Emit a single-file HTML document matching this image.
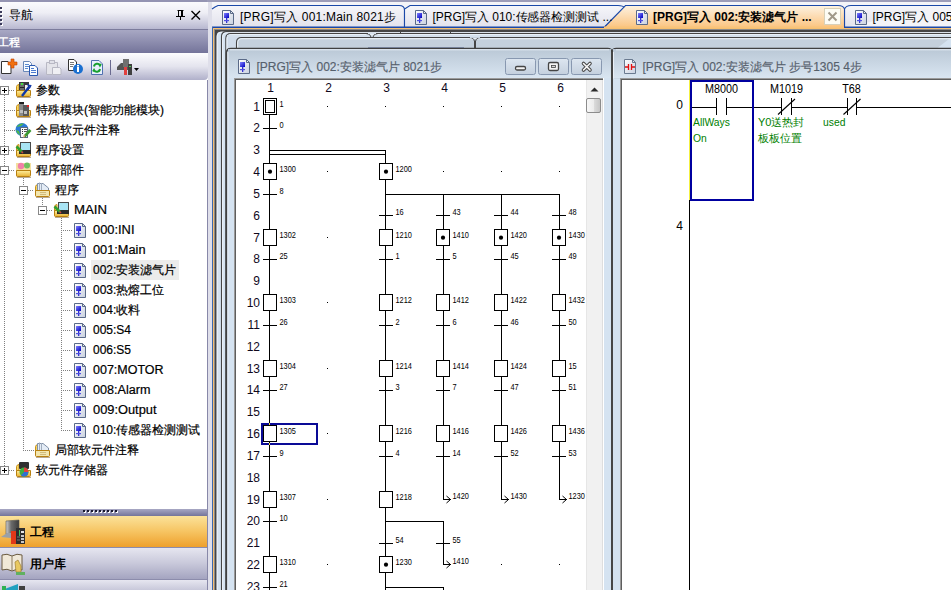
<!DOCTYPE html>
<html><head><meta charset="utf-8"><style>
*{margin:0;padding:0;box-sizing:border-box}
body{width:951px;height:590px;overflow:hidden;background:#fff;font-family:"Liberation Sans", sans-serif;font-size:12px;position:relative}
.a{position:absolute}
.t{position:absolute;white-space:nowrap;line-height:14px}
</style></head><body>
<!-- LEFT PANEL -->
<div class="a" style="left:0;top:0;width:212px;height:2px;background:#9494b2"></div>
<div class="a" style="left:0;top:2px;width:208px;height:27px;background:linear-gradient(#fbfbfd,#eeeef5 40%,#b8b8d0)"></div>
<div class="t" style="left:9px;top:8px;color:#000">导航</div>
<div class="a" style="left:0;top:29px;width:208px;height:1px;background:#7c7c9c"></div>
<div class="a" style="left:0;top:30px;width:208px;height:23px;background:linear-gradient(#a8a8c4,#74749a)"></div>
<div class="t" style="left:-2px;top:35px;color:#fff;font-size:11px;font-weight:bold">工程</div>
<div class="a" style="left:0;top:53px;width:208px;height:27px;background:linear-gradient(#fdfdfe,#e4e4ee 50%,#b0b0ca);border-radius:0 0 4px 4px"></div>
<div class="a" style="left:0;top:80px;width:207px;height:429px;background:#fff"></div>
<div class="a" style="left:207px;top:80px;width:1px;height:510px;background:#8888a8"></div>
<div class="a" style="left:208px;top:2px;width:4px;height:588px;background:#dfdfea"></div>
<div class="a" style="left:0;top:509px;width:207px;height:7px;background:linear-gradient(#a8a8c4,#74749a)"></div>
<div class="a" style="left:0;top:516px;width:207px;height:31px;background:linear-gradient(#fbe29a,#f6c462 50%,#eea02c)"></div>
<div class="t" style="left:30px;top:525px;font-weight:bold;font-size:12px;">工程</div>
<div class="a" style="left:0;top:547px;width:207px;height:1px;background:#8c8cac"></div>
<div class="a" style="left:0;top:548px;width:207px;height:31px;background:linear-gradient(#e6e6f0,#c8c8da 50%,#a4a4c0)"></div>
<div class="t" style="left:30px;top:557px;font-weight:bold;font-size:12px;">用户库</div>
<div class="a" style="left:0;top:579px;width:207px;height:1px;background:#8c8cac"></div>
<div class="a" style="left:0;top:580px;width:207px;height:10px;background:linear-gradient(#e6e6f0,#c8c8da)"></div>

<!-- TAB BAR -->


<svg class="a" style="left:0;top:0" width="951" height="590" font-family='"Liberation Sans", sans-serif'>
<defs>
<linearGradient id="docg" x1="0" y1="0" x2="1" y2="1"><stop offset="0" stop-color="#ffffff"/><stop offset="1" stop-color="#c8d0e0"/></linearGradient>
<linearGradient id="blueg" x1="0" y1="0" x2="1" y2="1"><stop offset="0" stop-color="#8080ff"/><stop offset="1" stop-color="#0000c0"/></linearGradient>
<linearGradient id="fold" x1="0" y1="0" x2="0" y2="1"><stop offset="0" stop-color="#fff0a0"/><stop offset="1" stop-color="#e8b030"/></linearGradient>
<linearGradient id="tabg" x1="0" y1="0" x2="0" y2="1"><stop offset="0" stop-color="#f6f6fa"/><stop offset="1" stop-color="#e2e2ec"/></linearGradient>
<linearGradient id="tabact" x1="0" y1="0" x2="0" y2="1"><stop offset="0" stop-color="#fdf2e2"/><stop offset="1" stop-color="#fbc27c"/></linearGradient>
</defs>
<rect x="207" y="0" width="744" height="2" fill="#9c9cb8"/>
<rect x="212" y="2" width="739" height="25" fill="#f4f4f8"/>
<path d="M212 27 V9 L217 5.5 H399 Q404.5 5.5 404.5 10 V27 Z" fill="url(#tabg)" stroke="none"/><path d="M212 9 L215 7 L218 5.5 H399 Q404.5 5.5 404.5 10 V27" fill="none" stroke="#1a48a8" stroke-width="1.1"/>
<path d="M844.5 27 V9 Q846 5.5 851 5.5 H951" fill="url(#tabg)" stroke="#1a48a8" stroke-width="1.1"/>
<path d="M404.5 27 V9 L410 5.5 H618 Q623 5.5 625 8 L605 27" fill="url(#tabg)" stroke="#1a48a8" stroke-width="1.1"/>
<path d="M603 28.5 L625.5 5.5 H838 Q843.5 5.5 844.5 9 V28.5" fill="url(#tabact)" stroke="#1a48a8" stroke-width="1.1"/>
<rect x="604" y="26.5" width="240" height="2.5" fill="#f9c47a"/>
<rect x="212" y="26.5" width="392" height="1" fill="#1a48a8"/>
<rect x="844" y="26.5" width="107" height="1" fill="#1a48a8"/>
<g transform="translate(222,10)">
<path d="M0.5 0.5 H8.5 L11.5 3.5 V14.5 H0.5 Z" fill="url(#docg)" stroke="#5a6a88" stroke-width="1"/>
<path d="M8.5 0.5 V3.5 H11.5" fill="none" stroke="#5a6a88" stroke-width="1"/>
<rect x="2" y="3" width="5" height="5" fill="url(#blueg)"/>
<rect x="4" y="8" width="1.3" height="5" fill="#3030d0"/>
<rect x="2" y="10" width="5" height="1.2" fill="#5050e0"/>
</g>
<text x="240" y="20.6" font-size="12" fill="#000" textLength="156" lengthAdjust="spacing">[PRG]写入 001:Main 8021步</text>
<g transform="translate(415,10)">
<path d="M0.5 0.5 H8.5 L11.5 3.5 V14.5 H0.5 Z" fill="url(#docg)" stroke="#5a6a88" stroke-width="1"/>
<path d="M8.5 0.5 V3.5 H11.5" fill="none" stroke="#5a6a88" stroke-width="1"/>
<rect x="2" y="3" width="5" height="5" fill="url(#blueg)"/>
<rect x="4" y="8" width="1.3" height="5" fill="#3030d0"/>
<rect x="2" y="10" width="5" height="1.2" fill="#5050e0"/>
</g>
<text x="432.5" y="20.6" font-size="12" fill="#000" textLength="180" lengthAdjust="spacing">[PRG]写入 010:传感器检测测试 ...</text>
<g transform="translate(636,10)">
<path d="M0.5 0.5 H8.5 L11.5 3.5 V14.5 H0.5 Z" fill="url(#docg)" stroke="#5a6a88" stroke-width="1"/>
<path d="M8.5 0.5 V3.5 H11.5" fill="none" stroke="#5a6a88" stroke-width="1"/>
<rect x="2" y="3" width="5" height="5" fill="url(#blueg)"/>
<rect x="4" y="8" width="1.3" height="5" fill="#3030d0"/>
<rect x="2" y="10" width="5" height="1.2" fill="#5050e0"/>
</g>
<text x="653" y="20.6" font-size="12" font-weight="bold" fill="#000">[PRG]写入 002:安装滤气片 ...</text>
<rect x="824.5" y="8.5" width="16" height="16" fill="#fdfcf4" stroke="#d8d0b8"/>
<path d="M828.5 12.5 L836.5 20.5 M836.5 12.5 L828.5 20.5" stroke="#a09888" stroke-width="2"/>
<g transform="translate(855,10)">
<path d="M0.5 0.5 H8.5 L11.5 3.5 V14.5 H0.5 Z" fill="url(#docg)" stroke="#5a6a88" stroke-width="1"/>
<path d="M8.5 0.5 V3.5 H11.5" fill="none" stroke="#5a6a88" stroke-width="1"/>
<rect x="2" y="3" width="5" height="5" fill="url(#blueg)"/>
<rect x="4" y="8" width="1.3" height="5" fill="#3030d0"/>
<rect x="2" y="10" width="5" height="1.2" fill="#5050e0"/>
</g>
<text x="872.5" y="20.6" font-size="12" fill="#000">[PRG]写入 005:S4 8021步</text>
<rect x="91" y="260" width="88" height="20" fill="#ececec"/>
<line x1="4.5" y1="95" x2="4.5" y2="469" stroke="#808080" stroke-width="1" stroke-dasharray="1 1"/>
<line x1="23.5" y1="176" x2="23.5" y2="449" stroke="#808080" stroke-width="1" stroke-dasharray="1 1"/>
<line x1="42.5" y1="196" x2="42.5" y2="209" stroke="#808080" stroke-width="1" stroke-dasharray="1 1"/>
<line x1="61.5" y1="216" x2="61.5" y2="429" stroke="#808080" stroke-width="1" stroke-dasharray="1 1"/>
<rect x="0.5" y="86.5" width="8" height="8" fill="#fff" stroke="#888"/><rect x="2" y="90" width="5" height="1" fill="#000"/><rect x="4" y="88" width="1" height="5" fill="#000"/>
<line x1="9" y1="90.5" x2="15" y2="90.5" stroke="#808080" stroke-width="1" stroke-dasharray="1 1"/>
<g transform="translate(15,82)">
<path d="M1.5 4.5 Q2 2.5 4 2.5 V13.5 H1.5 Z" fill="#f8d860" stroke="#c89020" stroke-width="1"/>
<rect x="4" y="0" width="10" height="9" fill="#3a3a3a"/><rect x="5" y="1" width="4" height="7" fill="#6a6a6a"/><rect x="6" y="1" width="2" height="2" fill="#40e040"/><rect x="5" y="5" width="4" height="1" fill="#222"/><rect x="10" y="3" width="3" height="6" fill="#f0f0f0"/>
<path d="M1.5 8.5 H15.5 V13.5 Q15.5 14.5 14.5 14.5 H2.5 Q1.5 14.5 1.5 13.5 Z" fill="url(#fold)" stroke="#b88010" stroke-width="1"/>
<rect x="2" y="15" width="14" height="1" fill="#8a7050" opacity="0.6"/>
<path d="M7 14 L14 5" stroke="#1038a8" stroke-width="2.4"/><path d="M12.5 2.5 L15 4 L14 6.5 M16 3 L14.5 6" stroke="#1038a8" stroke-width="1.6" fill="none"/>
</g>
<text x="36" y="93.5" font-size="12" fill="#000" stroke="#000" stroke-width="0.2">参数</text>
<line x1="4" y1="110.5" x2="15" y2="110.5" stroke="#808080" stroke-width="1" stroke-dasharray="1 1"/>
<g transform="translate(15,102)">
<path d="M1.5 4.5 Q2 2.5 4 2.5 V13.5 H1.5 Z" fill="#f8d860" stroke="#c89020" stroke-width="1"/>

<path d="M1.5 8.5 H15.5 V13.5 Q15.5 14.5 14.5 14.5 H2.5 Q1.5 14.5 1.5 13.5 Z" fill="url(#fold)" stroke="#b88010" stroke-width="1"/>
<rect x="2" y="15" width="14" height="1" fill="#8a7050" opacity="0.6"/>
<rect x="4" y="0" width="5" height="2" fill="#202020"/><rect x="4" y="2" width="5" height="12" fill="#8a8a8a"/><rect x="8" y="3" width="6" height="11" fill="#5a5a5a"/><rect x="12" y="3" width="2" height="2" fill="#e02020"/><rect x="5" y="8" width="3" height="3" fill="#c0c0c0"/><rect x="9" y="9" width="3" height="3" fill="#c0c0c0"/>
</g>
<text x="36" y="113.5" font-size="12" fill="#000" stroke="#000" stroke-width="0.2">特殊模块(智能功能模块)</text>
<line x1="4" y1="130.5" x2="15" y2="130.5" stroke="#808080" stroke-width="1" stroke-dasharray="1 1"/>
<g transform="translate(15,122)"><circle cx="7" cy="7.5" r="6.5" fill="#2a7ad8"/><path d="M1.5 5 Q4 1 9 1.5 Q7 4 4 4.5 Z" fill="#50b848"/><path d="M0.8 8 Q2 12 5 13.5 L4 9 Z" fill="#50b848"/><rect x="5.5" y="5.5" width="7" height="10" fill="#fafafa" stroke="#5a6a80"/><rect x="7" y="7" width="1" height="1" fill="#333"/><rect x="9" y="7" width="3" height="1" fill="#555"/><rect x="7" y="9" width="1" height="1" fill="#333"/><rect x="9" y="9" width="3" height="1" fill="#555"/><rect x="7" y="11" width="1" height="1" fill="#333"/><path d="M9.5 14.5 L15.5 8" stroke="#3a9a30" stroke-width="2.6"/><path d="M8.5 15.5 L10 13" stroke="#d8a060" stroke-width="1.2"/></g>
<text x="36" y="133.5" font-size="12" fill="#000" stroke="#000" stroke-width="0.2">全局软元件注释</text>
<rect x="0.5" y="146.5" width="8" height="8" fill="#fff" stroke="#888"/><rect x="2" y="150" width="5" height="1" fill="#000"/><rect x="4" y="148" width="1" height="5" fill="#000"/>
<line x1="9" y1="150.5" x2="15" y2="150.5" stroke="#808080" stroke-width="1" stroke-dasharray="1 1"/>
<g transform="translate(15,142)">
<path d="M1.5 4.5 Q2 2.5 4 2.5 V13.5 H1.5 Z" fill="#f8d860" stroke="#c89020" stroke-width="1"/>
<rect x="5.5" y="0.5" width="10" height="8" fill="#a8e4f4" stroke="#4a4a4a"/>
<path d="M1.5 8.5 H15.5 V13.5 Q15.5 14.5 14.5 14.5 H2.5 Q1.5 14.5 1.5 13.5 Z" fill="url(#fold)" stroke="#b88010" stroke-width="1"/>
<rect x="2" y="15" width="14" height="1" fill="#8a7050" opacity="0.6"/>
<rect x="4" y="8" width="12" height="4" fill="#2a2a2a"/><path d="M1.5 4.5 L7 10" stroke="#30a030" stroke-width="2.6"/><path d="M6.5 9.5 L8 11" stroke="#d04040" stroke-width="1.5"/>
</g>
<text x="36" y="153.5" font-size="12" fill="#000" stroke="#000" stroke-width="0.2">程序设置</text>
<rect x="0.5" y="166.5" width="8" height="8" fill="#fff" stroke="#888"/><rect x="2" y="170" width="5" height="1" fill="#000"/>
<line x1="9" y1="170.5" x2="15" y2="170.5" stroke="#808080" stroke-width="1" stroke-dasharray="1 1"/>
<g transform="translate(15,162)">
<path d="M1.5 4.5 Q2 2.5 4 2.5 V13.5 H1.5 Z" fill="#f8d860" stroke="#c89020" stroke-width="1"/>
<rect x="1" y="1" width="15" height="8" fill="#f4e0a0"/><circle cx="6" cy="4" r="3.2" fill="#f080a8"/><circle cx="12" cy="3.5" r="3" fill="#70c060"/>
<path d="M1.5 8.5 H15.5 V13.5 Q15.5 14.5 14.5 14.5 H2.5 Q1.5 14.5 1.5 13.5 Z" fill="url(#fold)" stroke="#b88010" stroke-width="1"/>
<rect x="2" y="15" width="14" height="1" fill="#8a7050" opacity="0.6"/>

</g>
<text x="36" y="173.5" font-size="12" fill="#000" stroke="#000" stroke-width="0.2">程序部件</text>
<rect x="19.5" y="186.5" width="8" height="8" fill="#fff" stroke="#888"/><rect x="21" y="190" width="5" height="1" fill="#000"/>
<line x1="28" y1="190.5" x2="34" y2="190.5" stroke="#808080" stroke-width="1" stroke-dasharray="1 1"/>
<g transform="translate(34,182)">
<path d="M1.5 4.5 Q2 2.5 4 2.5 V13.5 H1.5 Z" fill="#f8d860" stroke="#c89020" stroke-width="1"/>
<path d="M3.5 1.5 H9 L14.5 6 V13 H3.5 Z" fill="#e4ecf6" stroke="#8090a8"/><path d="M5.5 0.5 V10 M7.5 1 V10" stroke="#a0acbc"/>
<path d="M1.5 8.5 H15.5 V13.5 Q15.5 14.5 14.5 14.5 H2.5 Q1.5 14.5 1.5 13.5 Z" fill="#f2e6b0" stroke="#b88010" stroke-width="1"/>
<rect x="2" y="15" width="14" height="1" fill="#8a7050" opacity="0.6"/>
<path d="M6 10.5 H12 M6 12.5 H12" stroke="#c8b070" stroke-width="0.8"/>
</g>
<text x="55" y="193.5" font-size="12" fill="#000" stroke="#000" stroke-width="0.2">程序</text>
<rect x="38.5" y="206.5" width="8" height="8" fill="#fff" stroke="#888"/><rect x="40" y="210" width="5" height="1" fill="#000"/>
<line x1="47" y1="210.5" x2="53" y2="210.5" stroke="#808080" stroke-width="1" stroke-dasharray="1 1"/>
<g transform="translate(53,202)">
<path d="M1.5 4.5 Q2 2.5 4 2.5 V13.5 H1.5 Z" fill="#f8d860" stroke="#c89020" stroke-width="1"/>
<rect x="5.5" y="0.5" width="10" height="8" fill="#a8e4f4" stroke="#4a4a4a"/>
<path d="M1.5 8.5 H15.5 V13.5 Q15.5 14.5 14.5 14.5 H2.5 Q1.5 14.5 1.5 13.5 Z" fill="url(#fold)" stroke="#b88010" stroke-width="1"/>
<rect x="2" y="15" width="14" height="1" fill="#8a7050" opacity="0.6"/>
<rect x="4" y="8" width="12" height="4" fill="#2a2a2a"/><path d="M1.5 4.5 L7 10" stroke="#30a030" stroke-width="2.6"/><path d="M6.5 9.5 L8 11" stroke="#d04040" stroke-width="1.5"/>
</g>
<text x="74" y="213.5" font-size="12" fill="#000" stroke="#000" stroke-width="0.2" textLength="33" lengthAdjust="spacingAndGlyphs">MAIN</text>
<line x1="61" y1="230.5" x2="73" y2="230.5" stroke="#808080" stroke-width="1" stroke-dasharray="1 1"/>
<g transform="translate(74,223)">
<path d="M0.5 0.5 H8.5 L11.5 3.5 V14.5 H0.5 Z" fill="url(#docg)" stroke="#5a6a88" stroke-width="1"/>
<path d="M8.5 0.5 V3.5 H11.5" fill="none" stroke="#5a6a88" stroke-width="1"/>
<rect x="2" y="3" width="5" height="5" fill="url(#blueg)"/>
<rect x="4" y="8" width="1.3" height="5" fill="#3030d0"/>
<rect x="2" y="10" width="5" height="1.2" fill="#5050e0"/>
</g>
<text x="93" y="233.5" font-size="12" fill="#000" stroke="#000" stroke-width="0.2" textLength="41.5" lengthAdjust="spacingAndGlyphs">000:INI</text>
<line x1="61" y1="250.5" x2="73" y2="250.5" stroke="#808080" stroke-width="1" stroke-dasharray="1 1"/>
<g transform="translate(74,243)">
<path d="M0.5 0.5 H8.5 L11.5 3.5 V14.5 H0.5 Z" fill="url(#docg)" stroke="#5a6a88" stroke-width="1"/>
<path d="M8.5 0.5 V3.5 H11.5" fill="none" stroke="#5a6a88" stroke-width="1"/>
<rect x="2" y="3" width="5" height="5" fill="url(#blueg)"/>
<rect x="4" y="8" width="1.3" height="5" fill="#3030d0"/>
<rect x="2" y="10" width="5" height="1.2" fill="#5050e0"/>
</g>
<text x="93" y="253.5" font-size="12" fill="#000" stroke="#000" stroke-width="0.2" textLength="52.5" lengthAdjust="spacingAndGlyphs">001:Main</text>
<line x1="61" y1="270.5" x2="73" y2="270.5" stroke="#808080" stroke-width="1" stroke-dasharray="1 1"/>
<g transform="translate(74,263)">
<path d="M0.5 0.5 H8.5 L11.5 3.5 V14.5 H0.5 Z" fill="url(#docg)" stroke="#5a6a88" stroke-width="1"/>
<path d="M8.5 0.5 V3.5 H11.5" fill="none" stroke="#5a6a88" stroke-width="1"/>
<rect x="2" y="3" width="5" height="5" fill="url(#blueg)"/>
<rect x="4" y="8" width="1.3" height="5" fill="#3030d0"/>
<rect x="2" y="10" width="5" height="1.2" fill="#5050e0"/>
</g>
<text x="93" y="273.5" font-size="12" fill="#000" stroke="#000" stroke-width="0.2">002:安装滤气片</text>
<line x1="61" y1="290.5" x2="73" y2="290.5" stroke="#808080" stroke-width="1" stroke-dasharray="1 1"/>
<g transform="translate(74,283)">
<path d="M0.5 0.5 H8.5 L11.5 3.5 V14.5 H0.5 Z" fill="url(#docg)" stroke="#5a6a88" stroke-width="1"/>
<path d="M8.5 0.5 V3.5 H11.5" fill="none" stroke="#5a6a88" stroke-width="1"/>
<rect x="2" y="3" width="5" height="5" fill="url(#blueg)"/>
<rect x="4" y="8" width="1.3" height="5" fill="#3030d0"/>
<rect x="2" y="10" width="5" height="1.2" fill="#5050e0"/>
</g>
<text x="93" y="293.5" font-size="12" fill="#000" stroke="#000" stroke-width="0.2">003:热熔工位</text>
<line x1="61" y1="310.5" x2="73" y2="310.5" stroke="#808080" stroke-width="1" stroke-dasharray="1 1"/>
<g transform="translate(74,303)">
<path d="M0.5 0.5 H8.5 L11.5 3.5 V14.5 H0.5 Z" fill="url(#docg)" stroke="#5a6a88" stroke-width="1"/>
<path d="M8.5 0.5 V3.5 H11.5" fill="none" stroke="#5a6a88" stroke-width="1"/>
<rect x="2" y="3" width="5" height="5" fill="url(#blueg)"/>
<rect x="4" y="8" width="1.3" height="5" fill="#3030d0"/>
<rect x="2" y="10" width="5" height="1.2" fill="#5050e0"/>
</g>
<text x="93" y="313.5" font-size="12" fill="#000" stroke="#000" stroke-width="0.2">004:收料</text>
<line x1="61" y1="330.5" x2="73" y2="330.5" stroke="#808080" stroke-width="1" stroke-dasharray="1 1"/>
<g transform="translate(74,323)">
<path d="M0.5 0.5 H8.5 L11.5 3.5 V14.5 H0.5 Z" fill="url(#docg)" stroke="#5a6a88" stroke-width="1"/>
<path d="M8.5 0.5 V3.5 H11.5" fill="none" stroke="#5a6a88" stroke-width="1"/>
<rect x="2" y="3" width="5" height="5" fill="url(#blueg)"/>
<rect x="4" y="8" width="1.3" height="5" fill="#3030d0"/>
<rect x="2" y="10" width="5" height="1.2" fill="#5050e0"/>
</g>
<text x="93" y="333.5" font-size="12" fill="#000" stroke="#000" stroke-width="0.2">005:S4</text>
<line x1="61" y1="350.5" x2="73" y2="350.5" stroke="#808080" stroke-width="1" stroke-dasharray="1 1"/>
<g transform="translate(74,343)">
<path d="M0.5 0.5 H8.5 L11.5 3.5 V14.5 H0.5 Z" fill="url(#docg)" stroke="#5a6a88" stroke-width="1"/>
<path d="M8.5 0.5 V3.5 H11.5" fill="none" stroke="#5a6a88" stroke-width="1"/>
<rect x="2" y="3" width="5" height="5" fill="url(#blueg)"/>
<rect x="4" y="8" width="1.3" height="5" fill="#3030d0"/>
<rect x="2" y="10" width="5" height="1.2" fill="#5050e0"/>
</g>
<text x="93" y="353.5" font-size="12" fill="#000" stroke="#000" stroke-width="0.2">006:S5</text>
<line x1="61" y1="370.5" x2="73" y2="370.5" stroke="#808080" stroke-width="1" stroke-dasharray="1 1"/>
<g transform="translate(74,363)">
<path d="M0.5 0.5 H8.5 L11.5 3.5 V14.5 H0.5 Z" fill="url(#docg)" stroke="#5a6a88" stroke-width="1"/>
<path d="M8.5 0.5 V3.5 H11.5" fill="none" stroke="#5a6a88" stroke-width="1"/>
<rect x="2" y="3" width="5" height="5" fill="url(#blueg)"/>
<rect x="4" y="8" width="1.3" height="5" fill="#3030d0"/>
<rect x="2" y="10" width="5" height="1.2" fill="#5050e0"/>
</g>
<text x="93" y="373.5" font-size="12" fill="#000" stroke="#000" stroke-width="0.2" textLength="70.5" lengthAdjust="spacingAndGlyphs">007:MOTOR</text>
<line x1="61" y1="390.5" x2="73" y2="390.5" stroke="#808080" stroke-width="1" stroke-dasharray="1 1"/>
<g transform="translate(74,383)">
<path d="M0.5 0.5 H8.5 L11.5 3.5 V14.5 H0.5 Z" fill="url(#docg)" stroke="#5a6a88" stroke-width="1"/>
<path d="M8.5 0.5 V3.5 H11.5" fill="none" stroke="#5a6a88" stroke-width="1"/>
<rect x="2" y="3" width="5" height="5" fill="url(#blueg)"/>
<rect x="4" y="8" width="1.3" height="5" fill="#3030d0"/>
<rect x="2" y="10" width="5" height="1.2" fill="#5050e0"/>
</g>
<text x="93" y="393.5" font-size="12" fill="#000" stroke="#000" stroke-width="0.2" textLength="57.5" lengthAdjust="spacingAndGlyphs">008:Alarm</text>
<line x1="61" y1="410.5" x2="73" y2="410.5" stroke="#808080" stroke-width="1" stroke-dasharray="1 1"/>
<g transform="translate(74,403)">
<path d="M0.5 0.5 H8.5 L11.5 3.5 V14.5 H0.5 Z" fill="url(#docg)" stroke="#5a6a88" stroke-width="1"/>
<path d="M8.5 0.5 V3.5 H11.5" fill="none" stroke="#5a6a88" stroke-width="1"/>
<rect x="2" y="3" width="5" height="5" fill="url(#blueg)"/>
<rect x="4" y="8" width="1.3" height="5" fill="#3030d0"/>
<rect x="2" y="10" width="5" height="1.2" fill="#5050e0"/>
</g>
<text x="93" y="413.5" font-size="12" fill="#000" stroke="#000" stroke-width="0.2" textLength="63.5" lengthAdjust="spacingAndGlyphs">009:Output</text>
<line x1="61" y1="430.5" x2="73" y2="430.5" stroke="#808080" stroke-width="1" stroke-dasharray="1 1"/>
<g transform="translate(74,423)">
<path d="M0.5 0.5 H8.5 L11.5 3.5 V14.5 H0.5 Z" fill="url(#docg)" stroke="#5a6a88" stroke-width="1"/>
<path d="M8.5 0.5 V3.5 H11.5" fill="none" stroke="#5a6a88" stroke-width="1"/>
<rect x="2" y="3" width="5" height="5" fill="url(#blueg)"/>
<rect x="4" y="8" width="1.3" height="5" fill="#3030d0"/>
<rect x="2" y="10" width="5" height="1.2" fill="#5050e0"/>
</g>
<text x="93" y="433.5" font-size="12" fill="#000" stroke="#000" stroke-width="0.2">010:传感器检测测试</text>
<line x1="23" y1="450.5" x2="34" y2="450.5" stroke="#808080" stroke-width="1" stroke-dasharray="1 1"/>
<g transform="translate(34,442)">
<path d="M1.5 4.5 Q2 2.5 4 2.5 V13.5 H1.5 Z" fill="#f8d860" stroke="#c89020" stroke-width="1"/>
<path d="M3.5 1.5 H9 L14.5 6 V13 H3.5 Z" fill="#e4ecf6" stroke="#8090a8"/><path d="M5.5 0.5 V10 M7.5 1 V10" stroke="#a0acbc"/>
<path d="M1.5 8.5 H15.5 V13.5 Q15.5 14.5 14.5 14.5 H2.5 Q1.5 14.5 1.5 13.5 Z" fill="#f2e6b0" stroke="#b88010" stroke-width="1"/>
<rect x="2" y="15" width="14" height="1" fill="#8a7050" opacity="0.6"/>
<path d="M6 10.5 H12 M6 12.5 H12" stroke="#c8b070" stroke-width="0.8"/>
</g>
<text x="55" y="453.5" font-size="12" fill="#000" stroke="#000" stroke-width="0.2">局部软元件注释</text>
<rect x="0.5" y="466.5" width="8" height="8" fill="#fff" stroke="#888"/><rect x="2" y="470" width="5" height="1" fill="#000"/><rect x="4" y="468" width="1" height="5" fill="#000"/>
<line x1="9" y1="470.5" x2="15" y2="470.5" stroke="#808080" stroke-width="1" stroke-dasharray="1 1"/>
<g transform="translate(15,462)">
<path d="M1.5 4.5 Q2 2.5 4 2.5 V13.5 H1.5 Z" fill="#f8d860" stroke="#c89020" stroke-width="1"/>
<rect x="4" y="0" width="10" height="7" rx="1" fill="#303030"/>
<path d="M1.5 8.5 H15.5 V13.5 Q15.5 14.5 14.5 14.5 H2.5 Q1.5 14.5 1.5 13.5 Z" fill="url(#fold)" stroke="#b88010" stroke-width="1"/>
<rect x="2" y="15" width="14" height="1" fill="#8a7050" opacity="0.6"/>
<circle cx="9" cy="10" r="4.5" fill="#40b040"/><path d="M9 10 L9 5.5 A4.5 4.5 0 0 1 13.5 10 Z" fill="#e04040"/><path d="M9 10 L13.5 10 A4.5 4.5 0 0 1 6 13.4 Z" fill="#3070d0"/>
</g>
<text x="36" y="473.5" font-size="12" fill="#000" stroke="#000" stroke-width="0.2">软元件存储器</text>
<rect x="1" y="8" width="2" height="2" fill="#ffffff"/>
<rect x="0" y="7" width="2" height="2" fill="#3a3a5a"/>
<rect x="1" y="12" width="2" height="2" fill="#ffffff"/>
<rect x="0" y="11" width="2" height="2" fill="#3a3a5a"/>
<rect x="1" y="16" width="2" height="2" fill="#ffffff"/>
<rect x="0" y="15" width="2" height="2" fill="#3a3a5a"/>
<rect x="1" y="20" width="2" height="2" fill="#ffffff"/>
<rect x="0" y="19" width="2" height="2" fill="#3a3a5a"/>
<rect x="1" y="24" width="2" height="2" fill="#ffffff"/>
<rect x="0" y="23" width="2" height="2" fill="#3a3a5a"/>
<path d="M177.5 10.5 H183.5 M178.5 10.5 V16.5 H182.5 V10.5 M176 16.5 H185 M180.5 16.5 V20" stroke="#000" stroke-width="1" fill="none"/>
<rect x="181" y="11" width="1" height="5" fill="#000"/>
<path d="M191.5 11 L200 19.5 M200 11 L191.5 19.5" stroke="#000" stroke-width="1.35"/>
<path d="M1.5 61.5 H8 L11 64.5 V73.5 H1.5 Z" fill="#fff" stroke="#333"/>
<path d="M11 59 H14 V62 H17 V65 H14 V68 H11 V65 H8 V62 H11 Z" fill="#f07010" stroke="#c04000" stroke-width="0.6"/>
<path d="M23.5 61.5 H29.5 L31.5 63.5 V71.5 H23.5 Z" fill="#f8fbff" stroke="#6a88b8"/>
<rect x="25" y="64" width="4" height="1" fill="#5a8ad0"/><rect x="25" y="66" width="5" height="1" fill="#5a8ad0"/><rect x="25" y="68" width="3" height="1" fill="#5a8ad0"/>
<path d="M29.5 65.5 H35 L37.5 68 V75.5 H29.5 Z" fill="#f8fbff" stroke="#2a58b0"/>
<rect x="31" y="68" width="3" height="1" fill="#4a7ad0"/><rect x="31" y="70" width="5" height="1" fill="#4a7ad0"/><rect x="31" y="72" width="5" height="1" fill="#4a7ad0"/>
<path d="M46.5 62.5 H57.5 V74.5 H46.5 Z" fill="#e4e4ea" stroke="#b8b8c4"/>
<rect x="49.5" y="60.5" width="5" height="3" fill="#e0e0e8" stroke="#b8b8c4"/>
<path d="M52.5 67.5 H59.5 L61 69 V74.5 H52.5 Z" fill="#f0f0f4" stroke="#b8b8c4"/>
<path d="M68.5 59.5 H74 L76.5 62 V70.5 H68.5 Z" fill="#fff" stroke="#333"/>
<rect x="70" y="62" width="4" height="1" fill="#777"/><rect x="70" y="64" width="4" height="1" fill="#777"/><rect x="70" y="66" width="3" height="1" fill="#777"/>
<circle cx="78" cy="69" r="5" fill="#1a6fd0"/>
<rect x="77" y="67" width="2" height="5" fill="#fff"/><rect x="77" y="65" width="2" height="1.5" fill="#fff"/>
<path d="M91.5 60.5 H99 L102.5 64 V74.5 H91.5 Z" fill="#e8f0fc" stroke="#5070b0"/>
<path d="M94 66.5 A3.2 3.2 0 0 1 100 65.5 L101 64 M100 69 A3.2 3.2 0 0 1 94 70 L93 71.5" stroke="#18a030" stroke-width="2" fill="none"/>
<rect x="110" y="60" width="1" height="15" fill="#6a6a90"/>
<path d="M117 67 L121 63 H128 V70 H117 Z" fill="#555"/>
<rect x="123" y="59" width="6" height="8" fill="#707070"/>
<rect x="124" y="67" width="3" height="8" fill="#e04040"/>
<rect x="128" y="64" width="4" height="11" fill="#404040"/>
<rect x="129" y="66" width="2" height="1" fill="#50d050"/>
<path d="M134 68 H139 L136.5 71 Z" fill="#000"/>
<rect x="84" y="511" width="2" height="2" fill="#ffffff"/><rect x="83" y="510" width="2" height="2" fill="#1a1a30"/>
<rect x="88" y="511" width="2" height="2" fill="#ffffff"/><rect x="87" y="510" width="2" height="2" fill="#1a1a30"/>
<rect x="92" y="511" width="2" height="2" fill="#ffffff"/><rect x="91" y="510" width="2" height="2" fill="#1a1a30"/>
<rect x="96" y="511" width="2" height="2" fill="#ffffff"/><rect x="95" y="510" width="2" height="2" fill="#1a1a30"/>
<rect x="100" y="511" width="2" height="2" fill="#ffffff"/><rect x="99" y="510" width="2" height="2" fill="#1a1a30"/>
<rect x="104" y="511" width="2" height="2" fill="#ffffff"/><rect x="103" y="510" width="2" height="2" fill="#1a1a30"/>
<rect x="108" y="511" width="2" height="2" fill="#ffffff"/><rect x="107" y="510" width="2" height="2" fill="#1a1a30"/>
<rect x="112" y="511" width="2" height="2" fill="#ffffff"/><rect x="111" y="510" width="2" height="2" fill="#1a1a30"/>
<rect x="116" y="511" width="2" height="2" fill="#ffffff"/><rect x="115" y="510" width="2" height="2" fill="#1a1a30"/>
<defs><linearGradient id="lap" x1="0" y1="0" x2="1" y2="0"><stop offset="0" stop-color="#d0d0d0"/><stop offset="0.4" stop-color="#6a6a6a"/><stop offset="1" stop-color="#3a3a3a"/></linearGradient></defs>
<path d="M6 521 L19 520 V534 H6 Z" fill="url(#lap)" stroke="#555" stroke-width="0.6"/>
<path d="M1 537 L7 533 H13 L11 538 Z" fill="#9aa0a8"/>
<rect x="11" y="531" width="5" height="13" fill="#e03818"/>
<rect x="16" y="528" width="9" height="16" fill="#2e2e2e"/>
<rect x="19" y="530" width="1" height="6" fill="#40c060"/>
<rect x="21" y="531" width="3" height="2" fill="#e8e8e8"/><rect x="21" y="535" width="3" height="2" fill="#c8c8c8"/><rect x="21" y="538" width="3" height="2" fill="#c8c8c8"/><rect x="21" y="541" width="3" height="2" fill="#c8c8c8"/>
<path d="M17 537 H20 M17 540 H20" stroke="#888" stroke-width="0.8"/>
<path d="M2 555 Q7 553 12 556 Q17 553 22 555 V570 Q17 568 12 571 Q7 568 2 570 Z" fill="#f0e8d8" stroke="#6a5a40"/>
<path d="M12 556 V571" stroke="#8a7a60"/>
<path d="M15 562 L18 560 L21 566 V572 H16 Z" fill="#e8c860" stroke="#a08030" stroke-width="0.7"/>
<rect x="16" y="572" width="9" height="3" fill="#60b060"/>
<path d="M2 590 L18 584 V590 Z" fill="#20a0c0"/><rect x="2" y="586" width="4" height="4" fill="#30b050"/><rect x="19" y="586" width="6" height="4" fill="#404040"/>
<!-- MDI background / frames -->
<rect x="212" y="27" width="392" height="1" fill="#1a48a8"/>
<rect x="844" y="27" width="107" height="1" fill="#1a48a8"/>
<rect x="604" y="27" width="240" height="1" fill="#f9c47a"/>
<rect x="212" y="27" width="1" height="563" fill="#3a68b0"/>
<rect x="213" y="28" width="738" height="1" fill="#f8c070"/>
<rect x="213" y="28" width="1" height="562" fill="#f8c070"/>
<rect x="214" y="29" width="737" height="561" fill="#d4e2f0"/>
<rect x="214" y="29" width="737" height="1" fill="#8a8a8a"/>
<rect x="214" y="29" width="1" height="561" fill="#8a8a8a"/>
<rect x="215" y="30" width="736" height="2" fill="#454545"/>
<rect x="215" y="30" width="2" height="560" fill="#454545"/>
<path d="M216 590 V36 Q216 31 221 31 H951" stroke="#454545" stroke-width="1.3" fill="#d4e2f0"/>
<path d="M217.2 590 V36.5 Q217.2 32.2 221.5 32.2 H951" stroke="#eef4fa" stroke-width="1" fill="none"/>
<path d="M221.5 590 V36.6 Q221.5 31.6 226.5 31.6 H951" stroke="#454545" stroke-width="1.1" fill="#d4e2f0"/>
<path d="M222.7 590 V37.1 Q222.7 32.800000000000004 227.0 32.800000000000004 H951" stroke="#eef4fa" stroke-width="1" fill="none"/>
<path d="M225.8 590 V38.5 Q225.8 33.5 230.8 33.5 H951" stroke="#454545" stroke-width="1.1" fill="#d0dcea"/>
<path d="M227.0 590 V39.0 Q227.0 34.7 231.3 34.7 H951" stroke="#eef4fa" stroke-width="1" fill="none"/>
<rect x="227" y="35" width="724" height="2" fill="#d4e0ec"/>
<rect x="400" y="32" width="1" height="1" fill="#454545"/>
<rect x="450" y="32" width="1" height="1" fill="#454545"/>
<path d="M366 33.5 Q370.5 33.5 371 37 M378 33.5 Q373.5 33.5 373 37" stroke="#454545" stroke-width="1" fill="none"/>
<rect x="368" y="33" width="8" height="1" fill="#d4e0ec"/>
<path d="M236.5 590 V42.5 Q236.5 37.5 241.5 37.5 H951" stroke="#454545" stroke-width="1.1" fill="#c4d0dc"/>
<path d="M237.7 590 V43.0 Q237.7 38.7 242.0 38.7 H951" stroke="#eef4fa" stroke-width="1" fill="none"/>
<path d="M469 37.5 Q474 37.5 474.5 41.5 M481 37.5 Q476 37.5 475.5 41.5" stroke="#454545" stroke-width="1" fill="none"/>
<rect x="470" y="37" width="10" height="1" fill="#c4d0dc"/>
<rect x="474" y="41" width="2" height="7" fill="#454545"/>
<rect x="368" y="47" width="96" height="1" fill="#8898b8"/>
<!-- SFC window -->
<path d="M226.5 590 V53 Q226.5 48.5 231 48.5 H607.5 Q612 48.5 612 53 V590" stroke="#404040" stroke-width="1.6" fill="#d5e3f1"/>
<defs>
<linearGradient id="tg" x1="0" y1="0" x2="0" y2="1"><stop offset="0" stop-color="#c6d2de"/><stop offset="0.08" stop-color="#cad6e2"/><stop offset="0.12" stop-color="#d4e2f0"/><stop offset="1" stop-color="#d4e2f0"/></linearGradient>
<linearGradient id="btn" x1="0" y1="0" x2="0" y2="1"><stop offset="0" stop-color="#dde6f0"/><stop offset="1" stop-color="#c4d0de"/></linearGradient>
</defs>
<rect x="228" y="49" width="383" height="29" fill="url(#tb)"/><rect x="230" y="49.3" width="379" height="1" fill="#e6edf5"/><rect x="227.4" y="52" width="1" height="538" fill="#eaf0f8"/>
<defs><linearGradient id="tb" x1="0" y1="0" x2="0" y2="1"><stop offset="0" stop-color="#bac8d6"/><stop offset="1" stop-color="#d9e5f1"/></linearGradient></defs>
<rect x="234" y="78" width="369" height="512" fill="#9a9a9a"/>
<rect x="235" y="79" width="368" height="511" fill="#5e5e5e"/>
<rect x="236" y="80" width="367" height="510" fill="#fff"/>
<rect x="603" y="78" width="1" height="512" fill="#ffffff"/>
<rect x="586" y="80" width="17" height="510" fill="#f1f1f1"/>
<rect x="586" y="80" width="1" height="510" fill="#e6e6e6"/><rect x="602" y="80" width="1" height="510" fill="#dedede"/>
<path d="M590.5 91.5 L594.5 87.5 L598.5 91.5 Z" fill="#2a2a2a"/>
<defs><linearGradient id="thumb" x1="0" y1="0" x2="1" y2="0"><stop offset="0" stop-color="#f8f8f8"/><stop offset="0.5" stop-color="#ececec"/><stop offset="0.52" stop-color="#dcdcdc"/><stop offset="1" stop-color="#c4c4c4"/></linearGradient></defs>
<rect x="586.5" y="98.5" width="14" height="14" rx="1.5" fill="url(#thumb)" stroke="#8c8c8c"/>
<!-- buttons -->
<rect x="505.5" y="58.5" width="30" height="16" rx="2" fill="url(#btn)" stroke="#8898b0"/>
<rect x="538.5" y="58.5" width="30" height="16" rx="2" fill="url(#btn)" stroke="#8898b0"/>
<rect x="571.5" y="58.5" width="30" height="16" rx="2" fill="url(#btn)" stroke="#8898b0"/>
<rect x="515.5" y="66.5" width="10" height="3.5" rx="1.5" fill="#f4f4f4" stroke="#444" stroke-width="1.3"/>
<rect x="548.5" y="62.5" width="10" height="8" rx="1.5" fill="#f4f4f4" stroke="#444" stroke-width="1.3"/>
<rect x="551.5" y="65.5" width="4" height="2" fill="#d8d8d8" stroke="#444" stroke-width="0.8"/>
<path d="M583.5 63.5 L590 70 M590 63.5 L583.5 70" stroke="#484848" stroke-width="3.6" stroke-linecap="round"/>
<path d="M583.5 63.5 L590 70 M590 63.5 L583.5 70" stroke="#f8f8f8" stroke-width="1.6" stroke-linecap="round"/>
<text x="256.5" y="70.5" font-size="12" fill="#56606c" stroke="#56606c" stroke-width="0.15">[PRG]写入 002:安装滤气片 8021步</text>
<!-- Ladder window -->
<path d="M612 590 V53 Q612 48.5 616.5 48.5 H951" stroke="#404040" stroke-width="1.6" fill="none"/>
<rect x="613" y="49" width="338" height="29" fill="url(#tb)"/><rect x="616" y="49.3" width="335" height="1" fill="#e6edf5"/><rect x="613" y="52" width="1" height="538" fill="#eaf0f8"/>
<rect x="613" y="78.5" width="338" height="512" fill="#d4e2f0"/>
<rect x="620" y="78" width="331" height="512" fill="#9a9a9a"/>
<rect x="621" y="79" width="330" height="511" fill="#5e5e5e"/>
<rect x="622" y="80" width="329" height="510" fill="#fff"/>
<text x="642.5" y="70.5" font-size="12" fill="#56606c" stroke="#56606c" stroke-width="0.15">[PRG]写入 002:安装滤气片 步号1305 4步</text>
<g font-family='"Liberation Sans", sans-serif'>
<text x="270.5" y="92" font-size="12" fill="#10081c" text-anchor="middle">1</text>
<text x="328.5" y="92" font-size="12" fill="#10081c" text-anchor="middle">2</text>
<text x="386.5" y="92" font-size="12" fill="#10081c" text-anchor="middle">3</text>
<text x="444.5" y="92" font-size="12" fill="#10081c" text-anchor="middle">4</text>
<text x="502.5" y="92" font-size="12" fill="#10081c" text-anchor="middle">5</text>
<text x="560.5" y="92" font-size="12" fill="#10081c" text-anchor="middle">6</text>
<text x="260" y="110.5" font-size="12" fill="#10081c" text-anchor="end">1</text>
<text x="260" y="131.5" font-size="12" fill="#10081c" text-anchor="end">2</text>
<text x="260" y="153.5" font-size="12" fill="#10081c" text-anchor="end">3</text>
<text x="260" y="175.5" font-size="12" fill="#10081c" text-anchor="end">4</text>
<text x="260" y="197.5" font-size="12" fill="#10081c" text-anchor="end">5</text>
<text x="260" y="219.5" font-size="12" fill="#10081c" text-anchor="end">6</text>
<text x="260" y="241.5" font-size="12" fill="#10081c" text-anchor="end">7</text>
<text x="260" y="262.5" font-size="12" fill="#10081c" text-anchor="end">8</text>
<text x="260" y="284.5" font-size="12" fill="#10081c" text-anchor="end">9</text>
<text x="260" y="306.5" font-size="12" fill="#10081c" text-anchor="end">10</text>
<text x="260" y="328.5" font-size="12" fill="#10081c" text-anchor="end">11</text>
<text x="260" y="350.5" font-size="12" fill="#10081c" text-anchor="end">12</text>
<text x="260" y="372.5" font-size="12" fill="#10081c" text-anchor="end">13</text>
<text x="260" y="393.5" font-size="12" fill="#10081c" text-anchor="end">14</text>
<text x="260" y="415.5" font-size="12" fill="#10081c" text-anchor="end">15</text>
<text x="260" y="437.5" font-size="12" fill="#10081c" text-anchor="end">16</text>
<text x="260" y="459.5" font-size="12" fill="#10081c" text-anchor="end">17</text>
<text x="260" y="481.5" font-size="12" fill="#10081c" text-anchor="end">18</text>
<text x="260" y="503.5" font-size="12" fill="#10081c" text-anchor="end">19</text>
<text x="260" y="524.5" font-size="12" fill="#10081c" text-anchor="end">20</text>
<text x="260" y="546.5" font-size="12" fill="#10081c" text-anchor="end">21</text>
<text x="260" y="568.5" font-size="12" fill="#10081c" text-anchor="end">22</text>
<text x="260" y="590.5" font-size="12" fill="#10081c" text-anchor="end">23</text>
<rect x="269" y="115" width="1" height="476" fill="#000"/>
<rect x="263" y="98" width="14" height="17" fill="#fff"/>
<rect x="263" y="98" width="14" height="1" fill="#000"/>
<rect x="263" y="114" width="14" height="1" fill="#000"/>
<rect x="263" y="98" width="1" height="17" fill="#000"/>
<rect x="276" y="98" width="1" height="17" fill="#000"/>
<rect x="265" y="100" width="10" height="1" fill="#000"/>
<rect x="265" y="112" width="10" height="1" fill="#000"/>
<rect x="265" y="100" width="1" height="13" fill="#000"/>
<rect x="274" y="100" width="1" height="13" fill="#000"/>
<text transform="translate(279.5,107) scale(0.86,1)" font-size="8.6" fill="#000">1</text>
<rect x="269" y="150" width="117" height="1" fill="#000"/>
<rect x="269" y="154" width="117" height="1" fill="#000"/>
<rect x="385" y="150" width="1" height="441" fill="#000"/>
<rect x="263" y="163" width="14" height="17" fill="#fff"/>
<rect x="263" y="163" width="14" height="1" fill="#000"/>
<rect x="263" y="179" width="14" height="1" fill="#000"/>
<rect x="263" y="163" width="1" height="17" fill="#000"/>
<rect x="276" y="163" width="1" height="17" fill="#000"/>
<circle cx="270" cy="171.7" r="2.1" fill="#000"/>
<text transform="translate(279.5,172) scale(0.86,1)" font-size="8.6" fill="#000">1300</text>
<rect x="263" y="229" width="14" height="17" fill="#fff"/>
<rect x="263" y="229" width="14" height="1" fill="#000"/>
<rect x="263" y="245" width="14" height="1" fill="#000"/>
<rect x="263" y="229" width="1" height="17" fill="#000"/>
<rect x="276" y="229" width="1" height="17" fill="#000"/>
<text transform="translate(279.5,238) scale(0.86,1)" font-size="8.6" fill="#000">1302</text>
<rect x="263" y="294" width="14" height="17" fill="#fff"/>
<rect x="263" y="294" width="14" height="1" fill="#000"/>
<rect x="263" y="310" width="14" height="1" fill="#000"/>
<rect x="263" y="294" width="1" height="17" fill="#000"/>
<rect x="276" y="294" width="1" height="17" fill="#000"/>
<text transform="translate(279.5,303) scale(0.86,1)" font-size="8.6" fill="#000">1303</text>
<rect x="263" y="360" width="14" height="17" fill="#fff"/>
<rect x="263" y="360" width="14" height="1" fill="#000"/>
<rect x="263" y="376" width="14" height="1" fill="#000"/>
<rect x="263" y="360" width="1" height="17" fill="#000"/>
<rect x="276" y="360" width="1" height="17" fill="#000"/>
<text transform="translate(279.5,369) scale(0.86,1)" font-size="8.6" fill="#000">1304</text>
<rect x="263" y="425" width="14" height="17" fill="#fff"/>
<rect x="263" y="425" width="14" height="1" fill="#000"/>
<rect x="263" y="441" width="14" height="1" fill="#000"/>
<rect x="263" y="425" width="1" height="17" fill="#000"/>
<rect x="276" y="425" width="1" height="17" fill="#000"/>
<text transform="translate(279.5,434) scale(0.86,1)" font-size="8.6" fill="#000">1305</text>
<rect x="263" y="491" width="14" height="17" fill="#fff"/>
<rect x="263" y="491" width="14" height="1" fill="#000"/>
<rect x="263" y="507" width="14" height="1" fill="#000"/>
<rect x="263" y="491" width="1" height="17" fill="#000"/>
<rect x="276" y="491" width="1" height="17" fill="#000"/>
<text transform="translate(279.5,500) scale(0.86,1)" font-size="8.6" fill="#000">1307</text>
<rect x="263" y="556" width="14" height="17" fill="#fff"/>
<rect x="263" y="556" width="14" height="1" fill="#000"/>
<rect x="263" y="572" width="14" height="1" fill="#000"/>
<rect x="263" y="556" width="1" height="17" fill="#000"/>
<rect x="276" y="556" width="1" height="17" fill="#000"/>
<text transform="translate(279.5,565) scale(0.86,1)" font-size="8.6" fill="#000">1310</text>
<rect x="263" y="128" width="14" height="1" fill="#000"/>
<text transform="translate(279.5,127.5) scale(0.86,1)" font-size="8.6" fill="#000">0</text>
<rect x="263" y="194" width="14" height="1" fill="#000"/>
<text transform="translate(279.5,193.5) scale(0.86,1)" font-size="8.6" fill="#000">8</text>
<rect x="263" y="259" width="14" height="1" fill="#000"/>
<text transform="translate(279.5,258.5) scale(0.86,1)" font-size="8.6" fill="#000">25</text>
<rect x="263" y="325" width="14" height="1" fill="#000"/>
<text transform="translate(279.5,324.5) scale(0.86,1)" font-size="8.6" fill="#000">26</text>
<rect x="263" y="390" width="14" height="1" fill="#000"/>
<text transform="translate(279.5,389.5) scale(0.86,1)" font-size="8.6" fill="#000">27</text>
<rect x="263" y="456" width="14" height="1" fill="#000"/>
<text transform="translate(279.5,455.5) scale(0.86,1)" font-size="8.6" fill="#000">9</text>
<rect x="263" y="521" width="14" height="1" fill="#000"/>
<text transform="translate(279.5,520.5) scale(0.86,1)" font-size="8.6" fill="#000">10</text>
<rect x="263" y="587" width="14" height="1" fill="#000"/>
<text transform="translate(279.5,586.5) scale(0.86,1)" font-size="8.6" fill="#000">21</text>
<rect x="379" y="163" width="14" height="17" fill="#fff"/>
<rect x="379" y="163" width="14" height="1" fill="#000"/>
<rect x="379" y="179" width="14" height="1" fill="#000"/>
<rect x="379" y="163" width="1" height="17" fill="#000"/>
<rect x="392" y="163" width="1" height="17" fill="#000"/>
<circle cx="386" cy="171.7" r="2.1" fill="#000"/>
<text transform="translate(395.5,172) scale(0.86,1)" font-size="8.6" fill="#000">1200</text>
<rect x="385" y="194" width="175" height="1" fill="#000"/>
<rect x="443" y="194" width="1" height="306" fill="#000"/>
<rect x="501" y="194" width="1" height="306" fill="#000"/>
<rect x="559" y="194" width="1" height="306" fill="#000"/>
<rect x="379" y="215" width="14" height="1" fill="#000"/>
<text transform="translate(395.5,214.5) scale(0.86,1)" font-size="8.6" fill="#000">16</text>
<rect x="379" y="229" width="14" height="17" fill="#fff"/>
<rect x="379" y="229" width="14" height="1" fill="#000"/>
<rect x="379" y="245" width="14" height="1" fill="#000"/>
<rect x="379" y="229" width="1" height="17" fill="#000"/>
<rect x="392" y="229" width="1" height="17" fill="#000"/>
<text transform="translate(395.5,238) scale(0.86,1)" font-size="8.6" fill="#000">1210</text>
<rect x="379" y="259" width="14" height="1" fill="#000"/>
<text transform="translate(395.5,258.5) scale(0.86,1)" font-size="8.6" fill="#000">1</text>
<rect x="379" y="294" width="14" height="17" fill="#fff"/>
<rect x="379" y="294" width="14" height="1" fill="#000"/>
<rect x="379" y="310" width="14" height="1" fill="#000"/>
<rect x="379" y="294" width="1" height="17" fill="#000"/>
<rect x="392" y="294" width="1" height="17" fill="#000"/>
<text transform="translate(395.5,303) scale(0.86,1)" font-size="8.6" fill="#000">1212</text>
<rect x="379" y="325" width="14" height="1" fill="#000"/>
<text transform="translate(395.5,324.5) scale(0.86,1)" font-size="8.6" fill="#000">2</text>
<rect x="379" y="360" width="14" height="17" fill="#fff"/>
<rect x="379" y="360" width="14" height="1" fill="#000"/>
<rect x="379" y="376" width="14" height="1" fill="#000"/>
<rect x="379" y="360" width="1" height="17" fill="#000"/>
<rect x="392" y="360" width="1" height="17" fill="#000"/>
<text transform="translate(395.5,369) scale(0.86,1)" font-size="8.6" fill="#000">1214</text>
<rect x="379" y="390" width="14" height="1" fill="#000"/>
<text transform="translate(395.5,389.5) scale(0.86,1)" font-size="8.6" fill="#000">3</text>
<rect x="379" y="425" width="14" height="17" fill="#fff"/>
<rect x="379" y="425" width="14" height="1" fill="#000"/>
<rect x="379" y="441" width="14" height="1" fill="#000"/>
<rect x="379" y="425" width="1" height="17" fill="#000"/>
<rect x="392" y="425" width="1" height="17" fill="#000"/>
<text transform="translate(395.5,434) scale(0.86,1)" font-size="8.6" fill="#000">1216</text>
<rect x="379" y="456" width="14" height="1" fill="#000"/>
<text transform="translate(395.5,455.5) scale(0.86,1)" font-size="8.6" fill="#000">4</text>
<rect x="379" y="491" width="14" height="17" fill="#fff"/>
<rect x="379" y="491" width="14" height="1" fill="#000"/>
<rect x="379" y="507" width="14" height="1" fill="#000"/>
<rect x="379" y="491" width="1" height="17" fill="#000"/>
<rect x="392" y="491" width="1" height="17" fill="#000"/>
<text transform="translate(395.5,500) scale(0.86,1)" font-size="8.6" fill="#000">1218</text>
<rect x="436" y="215" width="14" height="1" fill="#000"/>
<text transform="translate(452.5,214.5) scale(0.86,1)" font-size="8.6" fill="#000">43</text>
<rect x="436" y="229" width="14" height="17" fill="#fff"/>
<rect x="436" y="229" width="14" height="1" fill="#000"/>
<rect x="436" y="245" width="14" height="1" fill="#000"/>
<rect x="436" y="229" width="1" height="17" fill="#000"/>
<rect x="449" y="229" width="1" height="17" fill="#000"/>
<circle cx="443" cy="237.7" r="2.1" fill="#000"/>
<text transform="translate(452.5,238) scale(0.86,1)" font-size="8.6" fill="#000">1410</text>
<rect x="436" y="259" width="14" height="1" fill="#000"/>
<text transform="translate(452.5,258.5) scale(0.86,1)" font-size="8.6" fill="#000">5</text>
<rect x="436" y="294" width="14" height="17" fill="#fff"/>
<rect x="436" y="294" width="14" height="1" fill="#000"/>
<rect x="436" y="310" width="14" height="1" fill="#000"/>
<rect x="436" y="294" width="1" height="17" fill="#000"/>
<rect x="449" y="294" width="1" height="17" fill="#000"/>
<text transform="translate(452.5,303) scale(0.86,1)" font-size="8.6" fill="#000">1412</text>
<rect x="436" y="325" width="14" height="1" fill="#000"/>
<text transform="translate(452.5,324.5) scale(0.86,1)" font-size="8.6" fill="#000">6</text>
<rect x="436" y="360" width="14" height="17" fill="#fff"/>
<rect x="436" y="360" width="14" height="1" fill="#000"/>
<rect x="436" y="376" width="14" height="1" fill="#000"/>
<rect x="436" y="360" width="1" height="17" fill="#000"/>
<rect x="449" y="360" width="1" height="17" fill="#000"/>
<text transform="translate(452.5,369) scale(0.86,1)" font-size="8.6" fill="#000">1414</text>
<rect x="436" y="390" width="14" height="1" fill="#000"/>
<text transform="translate(452.5,389.5) scale(0.86,1)" font-size="8.6" fill="#000">7</text>
<rect x="436" y="425" width="14" height="17" fill="#fff"/>
<rect x="436" y="425" width="14" height="1" fill="#000"/>
<rect x="436" y="441" width="14" height="1" fill="#000"/>
<rect x="436" y="425" width="1" height="17" fill="#000"/>
<rect x="449" y="425" width="1" height="17" fill="#000"/>
<text transform="translate(452.5,434) scale(0.86,1)" font-size="8.6" fill="#000">1416</text>
<rect x="436" y="456" width="14" height="1" fill="#000"/>
<text transform="translate(452.5,455.5) scale(0.86,1)" font-size="8.6" fill="#000">14</text>
<rect x="494" y="215" width="14" height="1" fill="#000"/>
<text transform="translate(510.5,214.5) scale(0.86,1)" font-size="8.6" fill="#000">44</text>
<rect x="494" y="229" width="14" height="17" fill="#fff"/>
<rect x="494" y="229" width="14" height="1" fill="#000"/>
<rect x="494" y="245" width="14" height="1" fill="#000"/>
<rect x="494" y="229" width="1" height="17" fill="#000"/>
<rect x="507" y="229" width="1" height="17" fill="#000"/>
<circle cx="501" cy="237.7" r="2.1" fill="#000"/>
<text transform="translate(510.5,238) scale(0.86,1)" font-size="8.6" fill="#000">1420</text>
<rect x="494" y="259" width="14" height="1" fill="#000"/>
<text transform="translate(510.5,258.5) scale(0.86,1)" font-size="8.6" fill="#000">45</text>
<rect x="494" y="294" width="14" height="17" fill="#fff"/>
<rect x="494" y="294" width="14" height="1" fill="#000"/>
<rect x="494" y="310" width="14" height="1" fill="#000"/>
<rect x="494" y="294" width="1" height="17" fill="#000"/>
<rect x="507" y="294" width="1" height="17" fill="#000"/>
<text transform="translate(510.5,303) scale(0.86,1)" font-size="8.6" fill="#000">1422</text>
<rect x="494" y="325" width="14" height="1" fill="#000"/>
<text transform="translate(510.5,324.5) scale(0.86,1)" font-size="8.6" fill="#000">46</text>
<rect x="494" y="360" width="14" height="17" fill="#fff"/>
<rect x="494" y="360" width="14" height="1" fill="#000"/>
<rect x="494" y="376" width="14" height="1" fill="#000"/>
<rect x="494" y="360" width="1" height="17" fill="#000"/>
<rect x="507" y="360" width="1" height="17" fill="#000"/>
<text transform="translate(510.5,369) scale(0.86,1)" font-size="8.6" fill="#000">1424</text>
<rect x="494" y="390" width="14" height="1" fill="#000"/>
<text transform="translate(510.5,389.5) scale(0.86,1)" font-size="8.6" fill="#000">47</text>
<rect x="494" y="425" width="14" height="17" fill="#fff"/>
<rect x="494" y="425" width="14" height="1" fill="#000"/>
<rect x="494" y="441" width="14" height="1" fill="#000"/>
<rect x="494" y="425" width="1" height="17" fill="#000"/>
<rect x="507" y="425" width="1" height="17" fill="#000"/>
<text transform="translate(510.5,434) scale(0.86,1)" font-size="8.6" fill="#000">1426</text>
<rect x="494" y="456" width="14" height="1" fill="#000"/>
<text transform="translate(510.5,455.5) scale(0.86,1)" font-size="8.6" fill="#000">52</text>
<rect x="552" y="215" width="14" height="1" fill="#000"/>
<text transform="translate(568.5,214.5) scale(0.86,1)" font-size="8.6" fill="#000">48</text>
<rect x="552" y="229" width="14" height="17" fill="#fff"/>
<rect x="552" y="229" width="14" height="1" fill="#000"/>
<rect x="552" y="245" width="14" height="1" fill="#000"/>
<rect x="552" y="229" width="1" height="17" fill="#000"/>
<rect x="565" y="229" width="1" height="17" fill="#000"/>
<circle cx="559" cy="237.7" r="2.1" fill="#000"/>
<text transform="translate(568.5,238) scale(0.86,1)" font-size="8.6" fill="#000">1430</text>
<rect x="552" y="259" width="14" height="1" fill="#000"/>
<text transform="translate(568.5,258.5) scale(0.86,1)" font-size="8.6" fill="#000">49</text>
<rect x="552" y="294" width="14" height="17" fill="#fff"/>
<rect x="552" y="294" width="14" height="1" fill="#000"/>
<rect x="552" y="310" width="14" height="1" fill="#000"/>
<rect x="552" y="294" width="1" height="17" fill="#000"/>
<rect x="565" y="294" width="1" height="17" fill="#000"/>
<text transform="translate(568.5,303) scale(0.86,1)" font-size="8.6" fill="#000">1432</text>
<rect x="552" y="325" width="14" height="1" fill="#000"/>
<text transform="translate(568.5,324.5) scale(0.86,1)" font-size="8.6" fill="#000">50</text>
<rect x="552" y="360" width="14" height="17" fill="#fff"/>
<rect x="552" y="360" width="14" height="1" fill="#000"/>
<rect x="552" y="376" width="14" height="1" fill="#000"/>
<rect x="552" y="360" width="1" height="17" fill="#000"/>
<rect x="565" y="360" width="1" height="17" fill="#000"/>
<text transform="translate(568.5,369) scale(0.86,1)" font-size="8.6" fill="#000">15</text>
<rect x="552" y="390" width="14" height="1" fill="#000"/>
<text transform="translate(568.5,389.5) scale(0.86,1)" font-size="8.6" fill="#000">51</text>
<rect x="552" y="425" width="14" height="17" fill="#fff"/>
<rect x="552" y="425" width="14" height="1" fill="#000"/>
<rect x="552" y="441" width="14" height="1" fill="#000"/>
<rect x="552" y="425" width="1" height="17" fill="#000"/>
<rect x="565" y="425" width="1" height="17" fill="#000"/>
<text transform="translate(568.5,434) scale(0.86,1)" font-size="8.6" fill="#000">1436</text>
<rect x="552" y="456" width="14" height="1" fill="#000"/>
<text transform="translate(568.5,455.5) scale(0.86,1)" font-size="8.6" fill="#000">53</text>
<rect x="443" y="499" width="8" height="1" fill="#000"/>
<path d="M446.5 496 L450.5 499.5 L446.5 503" stroke="#000" stroke-width="1" fill="none"/>
<text transform="translate(452.5,499) scale(0.86,1)" font-size="8.6" fill="#000">1420</text>
<rect x="501" y="499" width="8" height="1" fill="#000"/>
<path d="M504.5 496 L508.5 499.5 L504.5 503" stroke="#000" stroke-width="1" fill="none"/>
<text transform="translate(510.5,499) scale(0.86,1)" font-size="8.6" fill="#000">1430</text>
<rect x="559" y="499" width="8" height="1" fill="#000"/>
<path d="M562.5 496 L566.5 499.5 L562.5 503" stroke="#000" stroke-width="1" fill="none"/>
<text transform="translate(568.5,499) scale(0.86,1)" font-size="8.6" fill="#000">1230</text>
<rect x="385" y="521" width="59" height="1" fill="#000"/>
<rect x="443" y="521" width="1" height="44" fill="#000"/>
<rect x="379" y="543" width="14" height="1" fill="#000"/>
<text transform="translate(395.5,542.5) scale(0.86,1)" font-size="8.6" fill="#000">54</text>
<rect x="436" y="543" width="14" height="1" fill="#000"/>
<text transform="translate(452.5,542.5) scale(0.86,1)" font-size="8.6" fill="#000">55</text>
<rect x="379" y="556" width="14" height="17" fill="#fff"/>
<rect x="379" y="556" width="14" height="1" fill="#000"/>
<rect x="379" y="572" width="14" height="1" fill="#000"/>
<rect x="379" y="556" width="1" height="17" fill="#000"/>
<rect x="392" y="556" width="1" height="17" fill="#000"/>
<circle cx="386" cy="564.7" r="2.1" fill="#000"/>
<text transform="translate(395.5,565) scale(0.86,1)" font-size="8.6" fill="#000">1230</text>
<rect x="443" y="564" width="8" height="1" fill="#000"/>
<path d="M446.5 561 L450.5 564.5 L446.5 568" stroke="#000" stroke-width="1" fill="none"/>
<text transform="translate(452.5,564) scale(0.86,1)" font-size="8.6" fill="#000">1410</text>
<rect x="385" y="587" width="59" height="1" fill="#000"/>
<rect x="443" y="587" width="1" height="4" fill="#000"/>
<rect x="327" y="106" width="1" height="1" fill="#000"/>
<rect x="327" y="171" width="1" height="1" fill="#000"/>
<rect x="327" y="237" width="1" height="1" fill="#000"/>
<rect x="327" y="302" width="1" height="1" fill="#000"/>
<rect x="327" y="368" width="1" height="1" fill="#000"/>
<rect x="327" y="433" width="1" height="1" fill="#000"/>
<rect x="327" y="499" width="1" height="1" fill="#000"/>
<rect x="327" y="564" width="1" height="1" fill="#000"/>
<rect x="385" y="106" width="1" height="1" fill="#000"/>
<rect x="443" y="106" width="1" height="1" fill="#000"/>
<rect x="443" y="171" width="1" height="1" fill="#000"/>
<rect x="501" y="106" width="1" height="1" fill="#000"/>
<rect x="501" y="171" width="1" height="1" fill="#000"/>
<rect x="559" y="106" width="1" height="1" fill="#000"/>
<rect x="559" y="171" width="1" height="1" fill="#000"/>
<rect x="501" y="564" width="1" height="1" fill="#000"/>
<rect x="559" y="564" width="1" height="1" fill="#000"/>
<rect x="262" y="424" width="55" height="20" fill="none" stroke="#0a0a96" stroke-width="2"/>
<rect x="269" y="423" width="1" height="2" fill="#f0e040"/>
<rect x="269" y="443" width="1" height="2" fill="#f0e040"/>
</g>
<g transform="translate(238,59)">
<path d="M0.5 0.5 H8.5 L11.5 3.5 V14.5 H0.5 Z" fill="url(#docg)" stroke="#5a6a88" stroke-width="1"/>
<path d="M8.5 0.5 V3.5 H11.5" fill="none" stroke="#5a6a88" stroke-width="1"/>
<rect x="2" y="3" width="5" height="5" fill="url(#blueg)"/>
<rect x="4" y="8" width="1.3" height="5" fill="#3030d0"/>
<rect x="2" y="10" width="5" height="1.2" fill="#5050e0"/>
</g>
<g transform="translate(624,59)"><path d="M0.5 0.5 H8.5 L11.5 3.5 V14.5 H0.5 Z" fill="url(#docg)" stroke="#6a7a90"/><path d="M8.5 0.5 V3.5 H11.5" fill="none" stroke="#6a7a90"/><path d="M1 8 H4 M8 8 H11 M4.5 5 V11 M7.5 5 V11" stroke="#e01010" stroke-width="1.3"/></g>
<!-- ladder -->
<rect x="689" y="80" width="1" height="510" fill="#000"/>
<rect x="690" y="107" width="261" height="1" fill="#000"/>
<rect x="717" y="98" width="9" height="17" fill="#fff"/>
<rect x="716" y="98" width="1" height="17" fill="#000"/><rect x="726" y="98" width="1" height="17" fill="#000"/>
<rect x="782" y="98" width="9" height="17" fill="#fff"/>
<rect x="781" y="98" width="1" height="17" fill="#000"/><rect x="791" y="98" width="1" height="17" fill="#000"/>
<line x1="778" y1="114.5" x2="795" y2="99" stroke="#000" stroke-width="1.1"/>
<rect x="848" y="98" width="8" height="17" fill="#fff"/>
<rect x="847" y="98" width="1" height="17" fill="#000"/><rect x="856" y="98" width="1" height="17" fill="#000"/>
<line x1="843.5" y1="114.5" x2="860.5" y2="99" stroke="#000" stroke-width="1.1"/>
<text transform="translate(721.5,93) scale(0.9,1)" font-size="12" fill="#000" text-anchor="middle">M8000</text>
<text transform="translate(786.5,93) scale(0.9,1)" font-size="12" fill="#000" text-anchor="middle">M1019</text>
<text transform="translate(851.5,93) scale(0.9,1)" font-size="12" fill="#000" text-anchor="middle">T68</text>
<text x="683" y="109" font-size="12" fill="#000" text-anchor="end">0</text>
<text x="683" y="230" font-size="12" fill="#000" text-anchor="end">4</text>
<g font-size="11" fill="#008000">
<text transform="translate(693,126) scale(0.94,1)">AllWays</text><text transform="translate(693,142) scale(0.94,1)">On</text>
<text x="758" y="126">Y0送热封</text><text x="758" y="142">板板位置</text>
<text transform="translate(823,126) scale(0.94,1)">used</text>
</g>
<rect x="689" y="80" width="1" height="120" fill="#f4f040"/><rect x="690" y="80" width="64" height="2" fill="#0000a0"/><rect x="690" y="199" width="64" height="2" fill="#0000a0"/><rect x="690" y="80" width="2" height="121" fill="#0000a0"/><rect x="752" y="80" width="2" height="121" fill="#0000a0"/>
</svg>
</body></html>
